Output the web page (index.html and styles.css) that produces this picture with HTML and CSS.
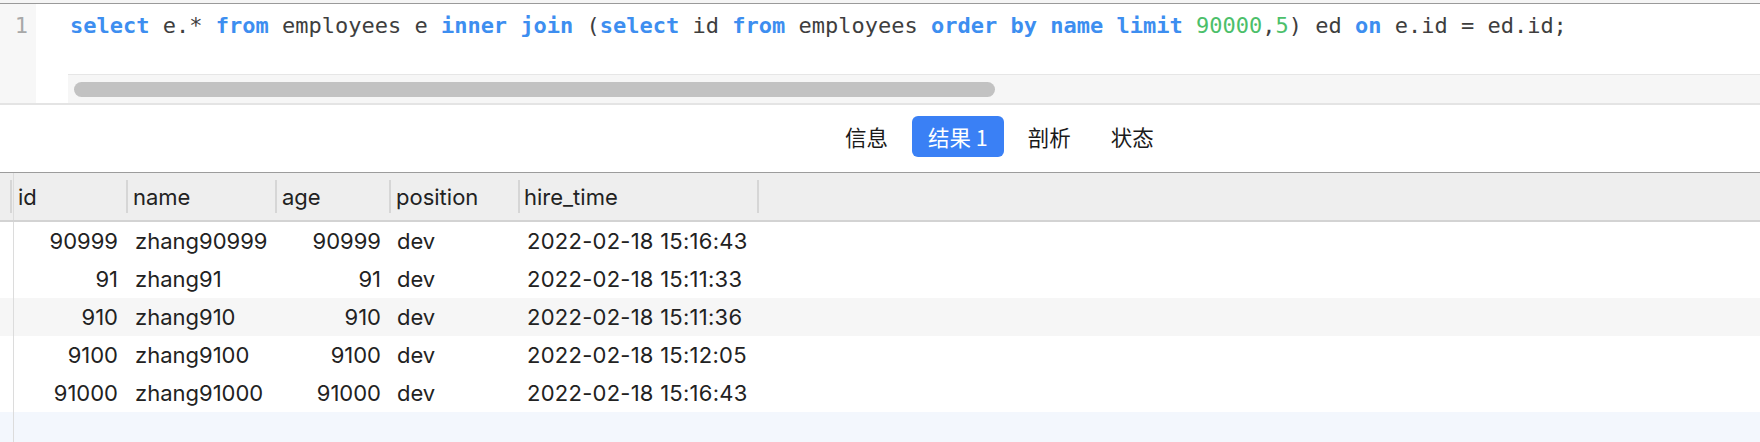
FILE: index.html
```html
<!DOCTYPE html>
<html>
<head>
<meta charset="utf-8">
<link rel="stylesheet" href="styles.css">
</head>
<body>
<div class="top-strip"></div>
<div class="editor">
  <div class="gutter"><span class="ln">1</span></div>
  <div class="code-area">
    <div class="code-line"><span class="kw">select</span> e.* <span class="kw">from</span> employees e <span class="kw">inner</span> <span class="kw">join</span> (<span class="kw">select</span> id <span class="kw">from</span> employees <span class="kw">order</span> <span class="kw">by</span> <span class="kw">name</span> <span class="kw">limit</span> <span class="num">90000</span>,<span class="num">5</span>) ed <span class="kw">on</span> e.id = ed.id;</div>
    <div class="hscroll"><div class="thumb"></div></div>
  </div>
</div>
<div class="tabs">
  <div class="tab">信息</div>
  <div class="tab active">结果 1</div>
  <div class="tab">剖析</div>
  <div class="tab">状态</div>
</div>
<div class="grid">
  <div class="row head">
    <div class="mark"><i class="sep"></i></div>
    <div class="hcell c-id">id</div><i class="sep"></i>
    <div class="hcell c-name">name</div><i class="sep"></i>
    <div class="hcell c-age">age</div><i class="sep"></i>
    <div class="hcell c-pos">position</div><i class="sep"></i>
    <div class="hcell c-time">hire_time</div><i class="sep"></i>
  </div>
  <div class="row">
    <div class="mark"></div>
    <div class="cell c-id num-r">90999</div>
    <div class="cell c-name">zhang90999</div>
    <div class="cell c-age num-r">90999</div>
    <div class="cell c-pos">dev</div>
    <div class="cell c-time">2022-02-18 15:16:43</div>
  </div>
  <div class="row">
    <div class="mark"></div>
    <div class="cell c-id num-r">91</div>
    <div class="cell c-name">zhang91</div>
    <div class="cell c-age num-r">91</div>
    <div class="cell c-pos">dev</div>
    <div class="cell c-time">2022-02-18 15:11:33</div>
  </div>
  <div class="row stripe">
    <div class="mark"></div>
    <div class="cell c-id num-r">910</div>
    <div class="cell c-name">zhang910</div>
    <div class="cell c-age num-r">910</div>
    <div class="cell c-pos">dev</div>
    <div class="cell c-time">2022-02-18 15:11:36</div>
  </div>
  <div class="row">
    <div class="mark"></div>
    <div class="cell c-id num-r">9100</div>
    <div class="cell c-name">zhang9100</div>
    <div class="cell c-age num-r">9100</div>
    <div class="cell c-pos">dev</div>
    <div class="cell c-time">2022-02-18 15:12:05</div>
  </div>
  <div class="row">
    <div class="mark"></div>
    <div class="cell c-id num-r">91000</div>
    <div class="cell c-name">zhang91000</div>
    <div class="cell c-age num-r">91000</div>
    <div class="cell c-pos">dev</div>
    <div class="cell c-time">2022-02-18 15:16:43</div>
  </div>
  <div class="row filler">
    <div class="mark"></div>
  </div>
</div>
</body>
</html>
```
FILE: styles.css
```css
* { box-sizing: border-box; }
html, body { margin: 0; padding: 0; background: #ffffff; }
body { width: 1760px; height: 442px; overflow: hidden; font-family: "Inter", "Liberation Sans", sans-serif; color: #222; }

.top-strip { height: 3px; background: #f5f5f5; }

.editor {
  display: flex;
  height: 102px;
  border-top: 1px solid #9a9a9a;
  border-bottom: 2px solid #e4e4e4;
}
.gutter {
  width: 36px;
  background: #f7f7f7;
  display: flex;
  justify-content: flex-end;
  padding-right: 8px;
}
.ln {
  font-family: "DejaVu Sans Mono", monospace;
  font-size: 22px;
  line-height: 44px;
  color: #a8a8a8;
}
.code-area {
  flex: 1;
  margin-left: 32px;
  display: flex;
  flex-direction: column;
}
.code-line {
  font-family: "DejaVu Sans Mono", monospace;
  font-size: 22px;
  line-height: 44px;
  height: 44px;
  color: #3e3e3e;
  padding-left: 2px;
  white-space: pre;
}
.kw { color: #3d8ef0; font-weight: bold; }
.num { color: #4cbf6a; }
.hscroll {
  margin-top: 26px;
  height: 29px;
  background: #f6f6f6;
  border-top: 1px solid #e6e6e6;
  padding: 7px 0 0 6px;
}
.thumb {
  width: 921px;
  height: 15px;
  border-radius: 8px;
  background: #c2c2c2;
}

.tabs {
  height: 68px;
  display: flex;
  align-items: flex-start;
  gap: 8px;
  padding: 11px 0 0 829px;
  border-bottom: 1px solid #9c9c9c;
}
.tab {
  height: 41px;
  line-height: 41px;
  padding: 0 16px;
  font-family: "Noto Sans CJK SC", "Inter", sans-serif;
  font-size: 21.5px;
  color: #1a1a1a;
  border-radius: 6px;
}
.tab.active { background: #3a80f5; color: #ffffff; }

.grid { display: flex; flex-direction: column; }
.row { display: flex; height: 38px; align-items: center; font-size: 22px; }
.row.head {
  height: 49px;
  background: #eeeeee;
  border-bottom: 2px solid #d3d3d3;
}
.mark {
  width: 14px;
  height: 100%;
  border-right: 1px solid #dcdcdc;
  display: flex;
  align-items: center;
  padding-left: 10px;
  flex: none;
}
.sep {
  display: block;
  width: 2px;
  height: 33px;
  background: #d6d6d6;
  flex: none;
}
.hcell { padding-left: 5px; flex: none; white-space: nowrap; }
.hcell.c-id { width: 112px; padding-left: 4px; }
.hcell.c-name { width: 147px; }
.hcell.c-age { width: 112px; }
.hcell.c-pos { width: 127px; }
.hcell.c-time { width: 237px; padding-left: 4px; }

.cell { flex: none; white-space: nowrap; padding-left: 7px; }
.cell.num-r { text-align: right; padding-left: 0; padding-right: 10px; }
.cell.c-id { width: 114px; }
.cell.c-name { width: 149px; }
.cell.c-age { width: 114px; }
.cell.c-pos { width: 129px; padding-left: 6px; }
.cell.c-time { width: 239px; letter-spacing: 0.25px; }

.row.stripe { background: #f6f6f6; }
.row.filler { height: 30px; background: #f3f7fd; }
```
